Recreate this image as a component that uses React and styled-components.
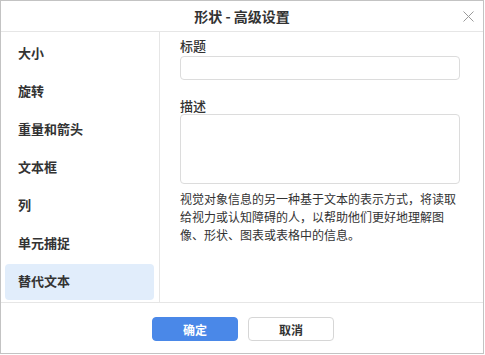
import React from "react";
import styled, { createGlobalStyle } from "styled-components";

const Global = createGlobalStyle`
  html, body { margin: 0; padding: 0; background: #fff; }
  body { font-family: "Noto Sans CJK SC", "Noto Sans", sans-serif; color: #333; }
  * { box-sizing: border-box; }
`;

const Dialog = styled.div`
  width: 484px;
  height: 354px;
  border: 1px solid #c3c3c3;
  display: flex;
  flex-direction: column;
  background: #fff;
`;

const Header = styled.div`
  height: 31px;
  border-bottom: 1px solid #e6e6e6;
  display: flex;
  align-items: center;
  justify-content: center;
  position: relative;
`;

const Title = styled.div`
  font-size: 14px;
  font-weight: 700;
  color: #333;
  line-height: 30px;
`;

const Close = styled.button`
  position: absolute;
  right: 9px;
  top: 9px;
  width: 12px;
  height: 12px;
  padding: 0;
  border: none;
  background: transparent;
  display: flex;
  align-items: center;
  justify-content: center;
`;

const Body = styled.div`
  flex: 1;
  display: flex;
  border-bottom: 1px solid #e6e6e6;
  min-height: 0;
`;

const Sidebar = styled.div`
  width: 159px;
  border-right: 1px solid #e6e6e6;
  padding: 4px 5px 0 4px;
  display: flex;
  flex-direction: column;
  gap: 2px;
`;

const NavItem = styled.div`
  height: 36px;
  display: flex;
  align-items: center;
  padding: 0 0 3px 13px;
  font-size: 13px;
  font-weight: 700;
  color: #333;
  border-radius: 4px;
  background: ${(p) => (p.$active ? "#e1edfb" : "transparent")};
`;

const Content = styled.div`
  flex: 1;
  padding: 6px 0 0 20px;
  display: flex;
  flex-direction: column;
`;

const Label = styled.div`
  font-size: 13px;
  line-height: 16px;
  font-weight: 500;
  color: #333;
  margin-top: ${(p) => p.$top || 0}px;
  margin-bottom: ${(p) => p.$bottom || 0}px;
`;

const Input = styled.div`
  width: 280px;
  height: 24px;
  border: 1px solid #dcdcdc;
  border-radius: 4px;
`;

const TextArea = styled.div`
  width: 280px;
  height: 70px;
  border: 1px solid #dcdcdc;
  border-radius: 4px;
`;

const Help = styled.p`
  width: 282px;
  margin: 6px 0 0;
  font-size: 12px;
  line-height: 18px;
  color: #333;
`;

const Footer = styled.div`
  height: 50px;
  display: flex;
  align-items: center;
  justify-content: center;
  gap: 10px;
  padding: 2px 0 0 2px;
`;

const Button = styled.button`
  width: 86px;
  height: 24px;
  border-radius: 4px;
  font-family: inherit;
  font-size: 12px;
  font-weight: 700;
  padding: 0;
  border: 1px solid ${(p) => (p.$primary ? "#4a88e8" : "#d6d6d6")};
  background: ${(p) => (p.$primary ? "#4a88e8" : "#fff")};
  color: ${(p) => (p.$primary ? "#fff" : "#333")};
`;

const items = ["大小", "旋转", "重量和箭头", "文本框", "列", "单元捕捉", "替代文本"];

export default function App() {
  return (
    <>
      <Global />
      <Dialog>
        <Header>
          <Title>形状 - 高级设置</Title>
          <Close aria-label="close">
            <svg width="11" height="11" viewBox="0 0 11 11">
              <path d="M0.5 0.5L10.5 10.5M10.5 0.5L0.5 10.5" stroke="#9a9a9a" strokeWidth="1" fill="none" />
            </svg>
          </Close>
        </Header>
        <Body>
          <Sidebar>
            {items.map((t, i) => (
              <NavItem key={t} $active={i === items.length - 1}>{t}</NavItem>
            ))}
          </Sidebar>
          <Content>
            <Label $bottom={2}>标题</Label>
            <Input />
            <Label $top={18}>描述</Label>
            <TextArea />
            <Help>视觉对象信息的另一种基于文本的表示方式，将读取给视力或认知障碍的人，以帮助他们更好地理解图像、形状、图表或表格中的信息。</Help>
          </Content>
        </Body>
        <Footer>
          <Button $primary>确定</Button>
          <Button>取消</Button>
        </Footer>
      </Dialog>
    </>
  );
}
